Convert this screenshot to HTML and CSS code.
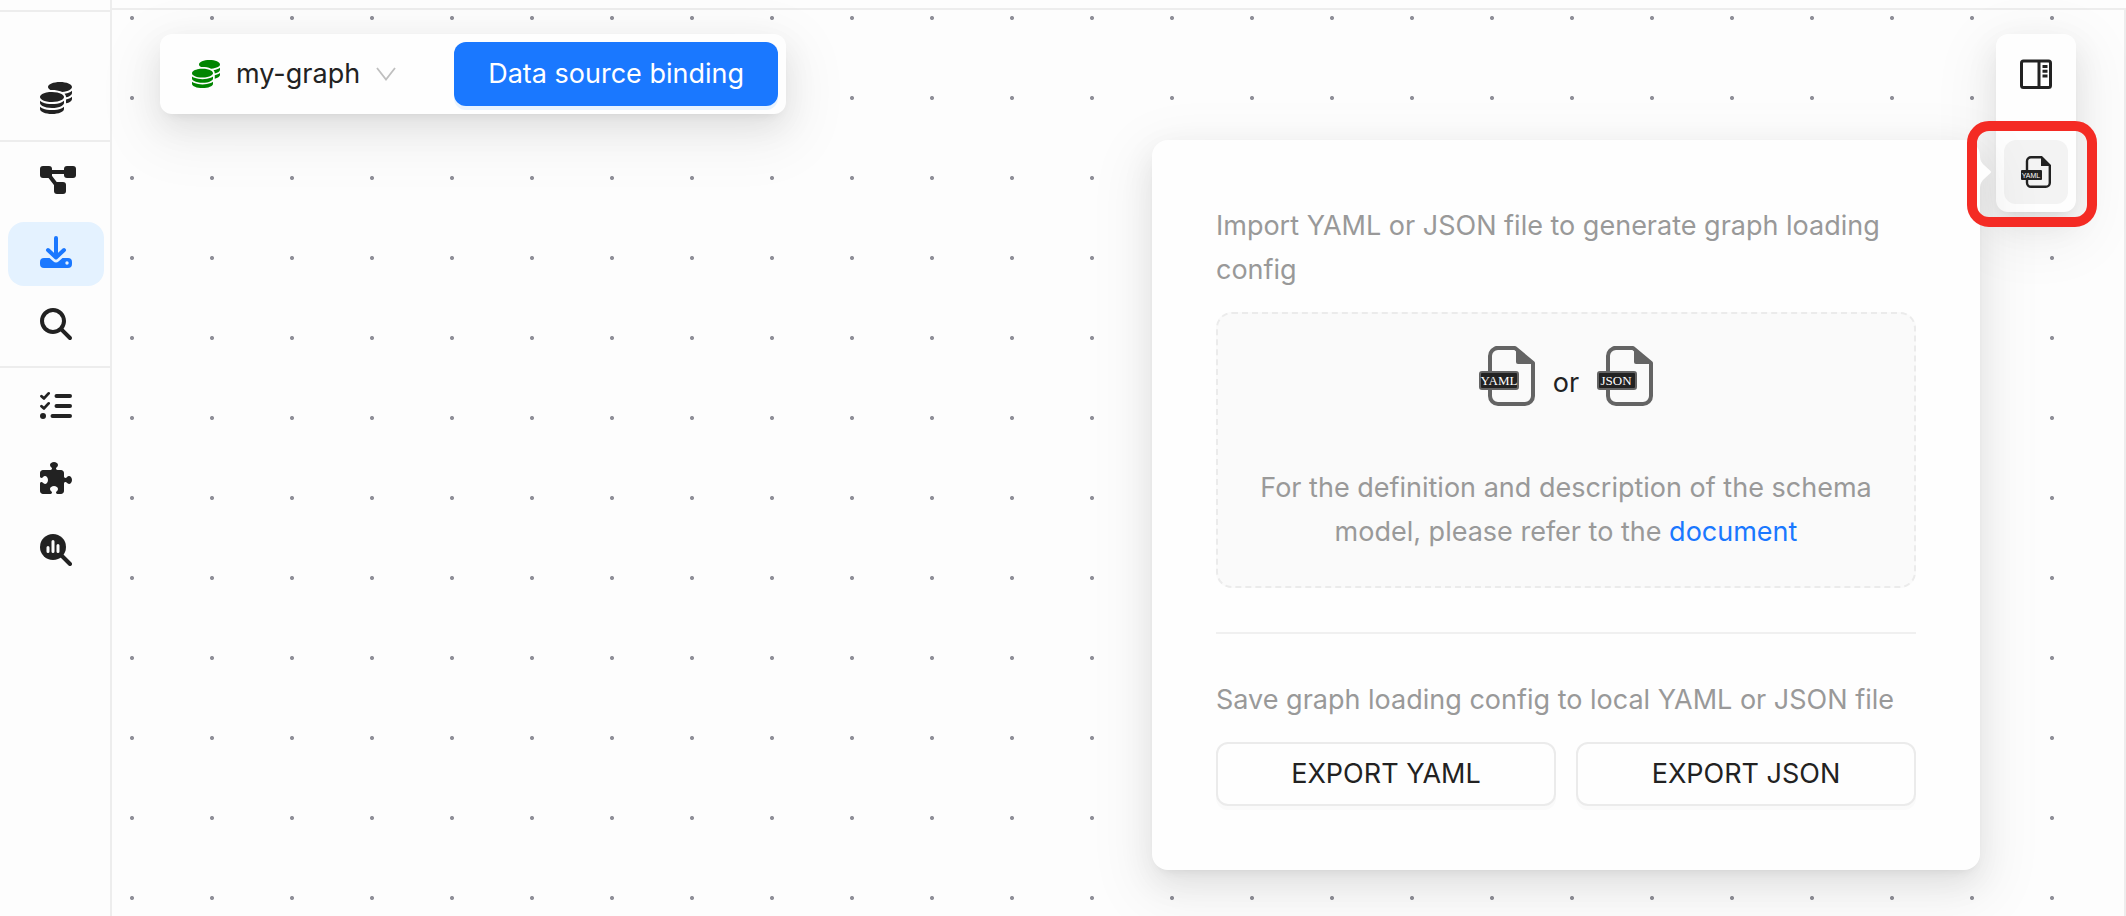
FILE: index.html
```html
<!DOCTYPE html>
<html lang="en">
<head>
<meta charset="utf-8">
<title>my-graph - Data source binding</title>
<link rel="stylesheet" href="styles.css">
</head>
<body>
<svg class="defs" aria-hidden="true">
  <symbol id="coins" viewBox="0 0 512 512"><path d="M512 80c0 18-14.3 34.6-38.4 48c-29.1 16.1-72.5 27.5-122.3 30.9c-3.7-1.8-7.4-3.5-11.3-5C300.6 137.4 248.2 128 192 128c-8.3 0-16.4 .2-24.5 .6l-1.1-.6C142.3 114.6 128 98 128 80c0-44.2 86-80 192-80S512 35.8 512 80zM160.7 161.1c10.2-.7 20.7-1.1 31.3-1.1c62.2 0 117.4 12.3 152.5 31.4C369.3 204.9 384 221.7 384 240c0 4-.7 7.9-2.1 11.7c-4.6 13.2-17 25.3-35 35.5c-.4 .3-.9 .5-1.3 .7c-35 19.4-90.8 32-153.6 32c-59.6 0-112.9-11.3-148.2-29.1c-1.9-.9-3.7-1.9-5.5-2.9C14.3 274.6 0 258 0 240c0-34.8 53.4-64.5 128-75.4c10.5-1.5 21.4-2.7 32.7-3.5zM416 240c0-21.900-10.600-39.900-24.100-53.400c28.300-4.400 54.200-11.400 76.200-20.500c16.300-6.800 31.500-15.200 43.900-25.500V176c0 19.300-16.500 37.100-43.800 50.900c-14.600 7.400-32.400 13.700-52.400 18.500c.1-1.800 .2-3.500 .2-5.300zm-32 96c0 18-14.300 34.600-38.400 48c-1.800 1-3.600 1.900-5.500 2.900C304.900 404.700 251.600 416 192 416c-62.800 0-118.600-12.600-153.600-32C14.300 370.600 0 354 0 336V300.600c12.500 10.300 27.600 18.700 43.900 25.500C83.400 342.600 135.800 352 192 352s108.600-9.400 148.100-25.900c7.800-3.200 15.300-6.900 22.400-10.900c6.100-3.400 11.800-7.200 17.200-11.200c1.500-1.100 2.900-2.300 4.300-3.400V336zm32 0V278.100c19-4.200 36.500-9.500 52.100-16c16.300-6.800 31.500-15.200 43.900-25.500V272c0 10.500-5 21-14.900 30.900c-16.300 16.300-45 29.700-81.300 38.400c.1-1.700 .2-3.500 .2-5.300zM192 448c56.200 0 108.600-9.400 148.100-25.900c16.300-6.800 31.500-15.200 43.900-25.500V432c0 44.200-86 80-192 80S0 476.200 0 432V396.600c12.500 10.300 27.600 18.700 43.900 25.500C83.400 438.600 135.800 448 192 448z"/></symbol>
</svg>
<div class="app">
  <nav class="sidebar" aria-label="Main">
    <a class="nav-item" href="#graphs" aria-label="Graphs"><svg class="icon"><use href="#coins"/></svg></a>
    <hr class="nav-line">
    <a class="nav-item" href="#modeling" aria-label="Modeling">
      <svg class="icon icon-wide" viewBox="0 0 36 28"><rect width="12" height="12" rx="3"/><rect x="24" width="12" height="12" rx="3"/><rect x="14" y="16" width="12" height="12" rx="3"/><path d="M8 6H28M8 8L18 21" fill="none" stroke="currentColor" stroke-width="4"/></svg>
    </a>
    <a class="nav-item active" href="#importing" aria-label="Importing" aria-current="page">
      <svg class="icon" viewBox="0 0 32 32"><path d="M16 2V21M8 14l8 7.500 8-7.500" fill="none" stroke="currentColor" stroke-width="4" stroke-linecap="round" stroke-linejoin="round"/><path fill-rule="evenodd" d="M4 22H9.500L13.200 25.200a4 4 0 0 0 5.600 0L22.500 22H28a4 4 0 0 1 4 4v2a4 4 0 0 1-4 4H4a4 4 0 0 1-4-4v-2a4 4 0 0 1 4-4zM27 25.300a1.700 1.700 0 1 0 0 3.400 1.700 1.700 0 0 0 0-3.400z"/></svg>
    </a>
    <a class="nav-item" href="#querying" aria-label="Querying">
      <svg class="icon" viewBox="0 0 512 512"><path d="M416 208c0 45.900-14.900 88.300-40 122.700L502.600 457.400c12.500 12.500 12.500 32.800 0 45.300s-32.800 12.500-45.300 0L330.700 376c-34.400 25.200-76.800 40-122.700 40C93.100 416 0 322.900 0 208S93.100 0 208 0S416 93.100 416 208zM208 352a144 144 0 1 0 0-288 144 144 0 1 0 0 288z"/></svg>
    </a>
    <hr class="nav-line">
    <a class="nav-item" href="#jobs" aria-label="Jobs">
      <svg class="icon" viewBox="0 0 32 32"><g fill="none" stroke="currentColor" stroke-linecap="round" stroke-linejoin="round"><path stroke-width="4" d="M16.500 6H30M16.500 16H30M12.500 26H30"/><path stroke-width="2.800" d="M1.500 6.200L4 8.400 8.600 3.400M1.500 16.200L4 18.400 8.600 13.400"/></g><circle cx="3" cy="26" r="3"/></svg>
    </a>
    <a class="nav-item" href="#extensions" aria-label="Extensions">
      <svg class="icon" viewBox="0 0 512 512"><path d="M192 104.800c0-9.200-5.800-17.300-13.200-22.800C167.200 73.300 160 61.300 160 48c0-26.500 28.700-48 64-48s64 21.500 64 48c0 13.300-7.200 25.300-18.800 34c-7.400 5.500-13.200 13.600-13.200 22.800c0 12.800 10.400 23.200 23.200 23.200H336c26.500 0 48 21.500 48 48v56.800c0 12.800 10.400 23.200 23.200 23.200c9.200 0 17.300-5.800 22.800-13.200c8.700-11.600 20.700-18.800 34-18.800c26.500 0 48 28.700 48 64s-21.500 64-48 64c-13.300 0-25.300-7.200-34-18.800c-5.500-7.400-13.600-13.200-22.800-13.200c-12.800 0-23.200 10.400-23.200 23.200V464c0 26.500-21.500 48-48 48H279.200c-12.800 0-23.200-10.400-23.200-23.200c0-9.200 5.800-17.300 13.200-22.800c11.600-8.700 18.800-20.700 18.800-34c0-26.500-28.700-48-64-48s-64 21.500-64 48c0 13.300 7.200 25.300 18.800 34c7.400 5.500 13.200 13.600 13.200 22.800c0 12.800-10.400 23.200-23.200 23.200H48c-26.500 0-48-21.500-48-48V343.200C0 330.400 10.400 320 23.200 320c9.200 0 17.300 5.800 22.800 13.200C54.700 344.800 66.700 352 80 352c26.500 0 48-28.700 48-64s-21.500-64-48-64c-13.300 0-25.300 7.200-34 18.800C40.500 250.200 32.400 256 23.200 256C10.400 256 0 245.600 0 232.800V176c0-26.500 21.500-48 48-48H168.800c12.800 0 23.200-10.400 23.200-23.200z"/></svg>
    </a>
    <a class="nav-item" href="#explore" aria-label="Explore">
      <svg class="icon" viewBox="0 0 32 32"><circle cx="13" cy="13" r="13"/><path d="M21 21l9 9" stroke="currentColor" stroke-width="4" stroke-linecap="round"/><path d="M8 13.500v4M13 7.500v10M18 11.500v6" stroke="#fdfdfd" stroke-width="3" stroke-linecap="round"/></svg>
    </a>
  </nav>

  <main class="canvas">
    <div class="toolbar">
      <button class="graph-picker" type="button" aria-haspopup="listbox">
        <svg class="picker-icon"><use href="#coins"/></svg>
        my-graph
        <svg class="chevron" viewBox="0 0 20 14"><path d="M1 1l9 11.500L19 1" fill="none" stroke="#bfbfbf" stroke-width="1.800"/></svg>
      </button>
      <button class="primary" type="button">Data source binding</button>
    </div>

    <div class="tools">
      <button class="tool" type="button" aria-label="Toggle panel">
        <svg class="panel-icon" viewBox="0 0 32 30"><g fill="none" stroke="currentColor" stroke-width="3"><rect x="1.500" y="2" width="29" height="26.500" rx="2"/><path d="M19 2v26"/></g><path d="M22.500 6h5v3h-5zM22.500 10.800h5v3h-5zM22.500 15.600h5v3h-5z"/></svg>
      </button>
      <div class="tool-anchor">
        <button class="tool selected" type="button" aria-label="Import or export config">
          <svg class="yaml-icon" viewBox="0 0 30 32"><path d="M10 1.200h10.500L28.800 9.500V27a4 4 0 0 1-4 3.800H10a4 4 0 0 1-4-4V5a4 4 0 0 1 4-3.800z" fill="none" stroke="currentColor" stroke-width="2.400"/><path d="M20 1l9 9h-9z"/><rect x="0" y="14" width="21" height="10" rx="1"/><text x="10" y="22" class="tiny-tag">YAML</text></svg>
        </button>

        <section class="popover">
          <p class="hint">Import YAML or JSON file to generate graph loading config</p>
          <div class="dropzone">
            <label class="upload">
              <input type="file" accept=".yaml,.json" aria-label="Config file" hidden>
              <svg class="file-icon" viewBox="0 0 56 60"><path d="M17 2H36L54 17V50a8 8 0 0 1-8 8H19a8 8 0 0 1-8-8V10a8 8 0 0 1 8-8z" fill="none" stroke="#646464" stroke-width="4" stroke-linejoin="round"/><path d="M37 1l18 17H39a2 2 0 0 1-2-2z" fill="#646464"/><rect x="1" y="26" width="38" height="17" rx="2" fill="#222" stroke="#646464" stroke-width="2"/><text x="20" y="39" class="tag">YAML</text></svg>
              <span class="or">or</span>
              <svg class="file-icon" viewBox="0 0 56 60"><path d="M17 2H36L54 17V50a8 8 0 0 1-8 8H19a8 8 0 0 1-8-8V10a8 8 0 0 1 8-8z" fill="none" stroke="#646464" stroke-width="4" stroke-linejoin="round"/><path d="M37 1l18 17H39a2 2 0 0 1-2-2z" fill="#646464"/><rect x="1" y="26" width="38" height="17" rx="2" fill="#222" stroke="#646464" stroke-width="2"/><text x="19" y="39" class="tag">JSON</text></svg>
            </label>
            <p class="note">For the definition and description of the schema model, please refer to the <a href="#document">document</a></p>
          </div>
          <hr class="split">
          <p class="hint">Save graph loading config to local YAML or JSON file</p>
          <div class="exports">
            <button class="export" type="button">EXPORT YAML</button>
            <button class="export" type="button">EXPORT JSON</button>
          </div>
          <svg class="arrow" viewBox="0 0 12 36"><path d="M0 0C0 6 1 8 4 11L10 16.500Q12 18 10 19.500L4 25C1 28 0 30 0 36z"/></svg>
        </section>
        <div class="highlight"></div>
      </div>
    </div>
  </main>
</div>
</body>
</html>
```

FILE: styles.css
```css
* { box-sizing: border-box; }

body {
  margin: 0;
  background: #fdfdfd;
  color: #222;
  font: 27px/44px Inter, "Liberation Sans", sans-serif;
}

button {
  font: inherit;
  color: inherit;
  cursor: pointer;
}

p { margin: 0; }

.defs {
  position: absolute;
  width: 0;
  height: 0;
}

svg { fill: currentColor; flex: none; }

.app {
  display: flex;
  min-height: 100vh;
  overflow: hidden;
}

/* Sidebar */
.sidebar {
  flex: none;
  width: 112px;
  padding-top: 10px;
  border-right: 2px solid #ededed;
  display: flex;
  flex-direction: column;
  gap: 8px;
}

.sidebar::before {
  content: "";
  height: 48px;
  border-top: 2px solid #ededed;
}

.nav-item {
  display: flex;
  align-items: center;
  height: 64px;
  margin: 0 6px 0 8px;
  padding: 0 0 4px 32px;
  border-radius: 16px;
  color: #222;
}

.nav-item.active {
  background: #e4f2ff;
  color: #1a78ff;
}

.icon { width: 32px; height: 32px; }
.icon-wide { width: 36px; height: 28px; }

.nav-line {
  width: 100%;
  height: 2px;
  margin: 0;
  border: 0;
  background: #ededed;
}

/* Canvas */
.canvas {
  flex: 1;
  display: flex;
  justify-content: space-between;
  align-items: flex-start;
  margin-top: 8px;
  padding: 24px 48px;
  border-top: 2px solid #ededed;
  border-right: 2px solid #ededed;
  background: radial-gradient(circle, #91919a 1.6px, transparent 2.4px) -20px -32px / 80px 80px;
}

.toolbar,
.tools,
.popover {
  background: #fefefe;
  box-shadow: 0 12px 32px rgba(0, 0, 0, .08), 0 6px 12px -8px rgba(0, 0, 0, .12), 0 18px 56px 16px rgba(0, 0, 0, .05);
}

.toolbar {
  display: flex;
  gap: 34px;
  padding: 8px;
  border-radius: 12px;
}

.graph-picker {
  display: flex;
  align-items: center;
  gap: 16px;
  padding: 0 24px;
  border: 0;
  background: none;
}

.picker-icon { width: 28px; height: 28px; color: #008500; }
.chevron { width: 20px; height: 14px; }

.primary {
  height: 64px;
  padding: 0 34px;
  border: 0;
  border-radius: 12px;
  background: #1a78ff;
  color: #fff;
  box-shadow: 0 4px 0 #e8f3ff;
}

.tools {
  display: flex;
  flex-direction: column;
  gap: 34px;
  padding: 8px;
  border-radius: 12px;
}

.tool {
  display: grid;
  place-items: center;
  width: 64px;
  height: 64px;
  padding: 0;
  border: 0;
  border-radius: 12px;
  background: none;
}

.tool.selected { background: #f3f3f3; }
.panel-icon { width: 32px; height: 30px; }
.yaml-icon { width: 30px; height: 32px; }

.tiny-tag {
  fill: #fff;
  font: 7px "Liberation Sans", sans-serif;
  text-anchor: middle;
}

.tool-anchor { position: relative; }

/* Popover */
.popover {
  position: absolute;
  top: 0;
  right: calc(100% + 24px);
  width: 828px;
  padding: 64px;
  border-radius: 16px;
}

.hint { color: #999; }

.dropzone {
  margin-top: 20px;
  padding: 30px 32px 32px;
  border: 2px dashed #ebebeb;
  border-radius: 16px;
  background: #fafafa;
  text-align: center;
}

.upload {
  display: flex;
  justify-content: center;
  align-items: center;
  gap: 18px;
  cursor: pointer;
}

.or { padding-top: 14px; }

.file-icon { width: 56px; height: 64px; }

.tag {
  fill: #fff;
  font: 13px "Liberation Serif", serif;
  text-anchor: middle;
}

.note { margin-top: 58px; color: #999; }
.note a { color: #1a78ff; text-decoration: none; }

.split {
  height: 2px;
  margin: 44px 0;
  border: 0;
  background: #f0f0f0;
}

.exports {
  display: flex;
  gap: 20px;
  margin-top: 20px;
}

.export {
  flex: 1;
  height: 64px;
  border: 2px solid #ebebeb;
  border-radius: 12px;
  background: #fefefe;
  box-shadow: 0 4px 0 #fafafa;
}

.arrow {
  position: absolute;
  top: 14px;
  left: 100%;
  width: 12px;
  height: 36px;
  color: #fefefe;
}

.highlight {
  position: absolute;
  top: -19px;
  left: -37px;
  width: 130px;
  height: 106px;
  border: 10px solid #f42b24;
  border-radius: 22px;
  pointer-events: none;
}
```
